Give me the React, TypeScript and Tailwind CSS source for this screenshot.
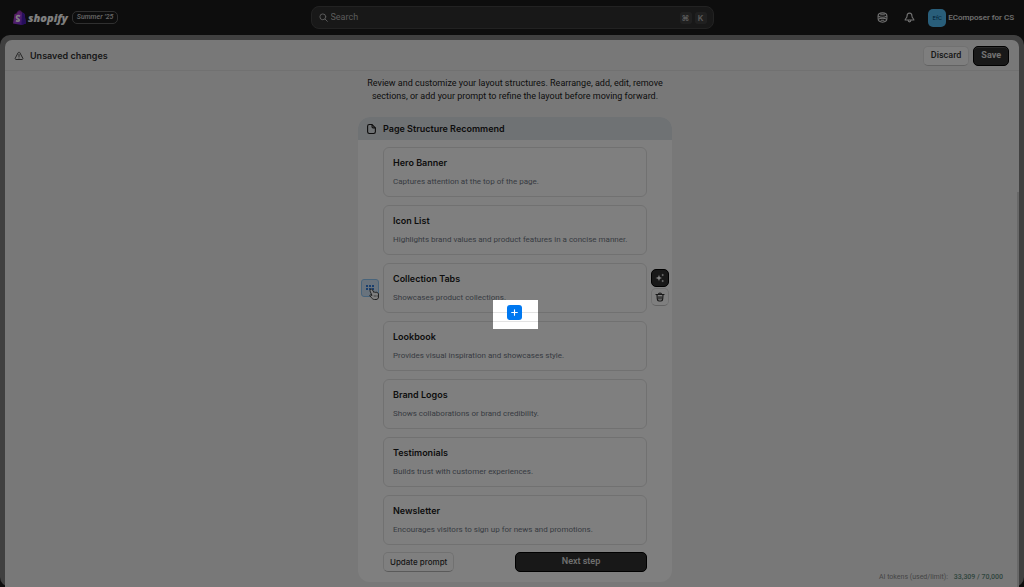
import type { ReactNode } from 'react';

const sections = [
  { title: 'Hero Banner', text: 'Captures attention at the top of the page.' },
  { title: 'Icon List', text: 'Highlights brand values and product features in a concise manner.' },
  { title: 'Collection Tabs', text: 'Showcases product collections.' },
  { title: 'Lookbook', text: 'Provides visual inspiration and showcases style.' },
  { title: 'Brand Logos', text: 'Shows collaborations or brand credibility.' },
  { title: 'Testimonials', text: 'Builds trust with customer experiences.' },
  { title: 'Newsletter', text: 'Encourages visitors to sign up for news and promotions.' },
];

function ShopifyBag() {
  return (
    <svg viewBox="0 0 26 30" className="h-[15px] w-[13px]" aria-hidden="true">
      <defs>
        <linearGradient id="bag" x1="0" y1="0" x2="1" y2="1">
          <stop offset="0" stopColor="#c83fc0" />
          <stop offset="0.55" stopColor="#9a3be0" />
          <stop offset="1" stopColor="#5a20d0" />
        </linearGradient>
      </defs>
      <path d="M3 8 7 7C8 3 11 0 14 1c2 0 3 2 4 4l3 1 2 2 3 19-9 3L0 27Z" fill="url(#bag)" />
      <path d="m18 5 3 1 2 2 3 19-9 3Z" fill="#4d1fb8" />
      <path d="M7 8c1-4 4-6 6-6s3 2 3 5" fill="none" stroke="#6d238c" strokeWidth="1.3" />
      <path d="M14 12.500c-4-2.500-7-.5-7 2 0 3 5.500 3 5.500 6 0 2.500-3.500 2.500-6.500.5" fill="none" stroke="#fff" strokeWidth="3.400" />
    </svg>
  );
}

function CoinsIcon() {
  return (
    <svg viewBox="0 0 20 20" className="size-[11px]" fill="none" stroke="currentColor" strokeWidth="2" strokeLinejoin="round" aria-hidden="true">
      <path d="M10 1.500c5 0 8 2 8 5.500v5c0 4-3 6.500-8 6.500S2 16 2 12V7c0-3.500 3-5.500 8-5.500Z" />
      <path d="M2 7c4 3.500 12 3.500 16 0" />
      <path d="M2 13.500c4-3 12-3 16 0" />
      <path d="M6.500 5h7M7.500 15h5" strokeLinecap="round" />
    </svg>
  );
}

function BellIcon() {
  return (
    <svg viewBox="0 0 20 20" className="size-[11px]" fill="none" stroke="currentColor" strokeWidth="2" strokeLinejoin="round" aria-hidden="true">
      <path d="M10 2C7 2 5.500 4 5.500 7.500c0 3-2.500 4-3.500 7h16c-1-3-3.500-4-3.500-7C14.500 4 13 2 10 2Z" />
      <path d="M7.500 14.500c0 4.500 5 4.500 5 0" />
    </svg>
  );
}

function WarningIcon() {
  return (
    <svg viewBox="0 0 20 20" className="size-[10px]" fill="none" stroke="currentColor" strokeWidth="2" strokeLinejoin="round" strokeLinecap="round" aria-hidden="true">
      <path d="M8.400 3.200c.7-1.300 2.500-1.300 3.200 0l6 11.200c.7 1.200-.2 2.600-1.600 2.600H4c-1.400 0-2.300-1.400-1.600-2.600Z" />
      <path d="M10 7v4M10 14v.1" />
    </svg>
  );
}

function PageIcon() {
  return (
    <svg viewBox="0 0 16 18" className="h-[10px] w-[9px]" fill="none" stroke="currentColor" strokeWidth="2" strokeLinejoin="round" aria-hidden="true">
      <path d="M4 1h5l6 6v7a3 3 0 0 1-3 3H4a3 3 0 0 1-3-3V4a3 3 0 0 1 3-3Z" />
      <path d="M9 1v4a2 2 0 0 0 2 2h4" />
    </svg>
  );
}

function SparkIcon() {
  return (
    <svg viewBox="0 0 20 20" className="size-[10px]" fill="currentColor" aria-hidden="true">
      <path d="M8 3c.8 4.600 2 6.200 6 7-4 .8-5.200 2.400-6 7-.8-4.600-2-6.200-7-7 5-.8 6.200-2.400 7-7Z" />
      <path d="M15.500 1c.4 2 1 2.600 3 3-2 .4-2.600 1-3 3-.4-2-1-2.600-3-3 2-.4 2.600-1 3-3ZM15.500 13c.4 2 1 2.600 3 3-2 .4-2.600 1-3 3-.4-2-1-2.600-3-3 2-.4 2.600-1 3-3Z" />
    </svg>
  );
}

function TrashIcon() {
  return (
    <svg viewBox="0 0 20 20" className="size-[10px]" fill="none" stroke="currentColor" strokeWidth="2.400" strokeLinecap="round" strokeLinejoin="round" aria-hidden="true">
      <path d="M2 5h16M7 5c0-4 6-4 6 0M4 5l.6 9c.2 3 1 4 3.400 4h4c2.400 0 3.200-1 3.400-4l.6-9M8 9v5M12 9v5" />
    </svg>
  );
}

function DragIcon() {
  return (
    <svg viewBox="0 0 8 6" className="h-[6px] w-2" fill="#005bd3" aria-hidden="true">
      {[1, 4, 7].map((x) => [1, 4].map((y) => <circle key={`${x}-${y}`} cx={x} cy={y} r="1" />))}
    </svg>
  );
}

function HandCursor() {
  return (
    <svg viewBox="0 0 22 24" className="absolute top-[8px] left-[7px] h-3 w-[11px]" aria-hidden="true">
      <path
        d="M3 3c1-2 3-1 4 1l3 5 1-1c1-1 2 0 2 1 1-1 3-1 3 1 1-1 3 0 3 2v6c0 3-2 5-5 5h-3c-3 0-5-2-9-7-1-2 0-3 2-2l2 1-4-9c0-1 0-2 1-3Z"
        fill="#fff"
        stroke="#303030"
        strokeWidth="1.800"
        strokeLinejoin="round"
      />
      <path d="M10.500 14v4M13.500 14v4M16.500 14v4" stroke="#303030" strokeWidth="0.800" />
    </svg>
  );
}

function Key({ children }: { children: ReactNode }) {
  return (
    <kbd className="flex size-3 items-center justify-center rounded-[3px] bg-[#414141] font-['Inter',sans-serif] text-[8px] font-semibold text-[#b5b5b5]">
      {children}
    </kbd>
  );
}

function TopBar() {
  return (
    <header className="grid h-[35px] shrink-0 grid-cols-[1fr_403px_1fr] items-center bg-[#1a1a1a] text-[#e3e3e3]">
      <div className="flex items-center pl-[13px]">
        <ShopifyBag />
        <span className="ml-[2px] font-['Open_Sans',sans-serif] text-[11px] leading-4 font-extrabold text-white italic">shopify</span>
        <span className="ml-1 flex h-[13px] items-center rounded-[5px] border border-[#616161] px-1 font-['Roboto',sans-serif] text-[7px] leading-[11px] font-medium text-[#d0d0d0] italic">
          Summer ’25
        </span>
      </div>
      <label className="flex h-[23px] items-center rounded-[8px] border border-[#454545] bg-[#303030] pr-[6px] pl-[7px]">
        <svg viewBox="0 0 20 20" className="size-[9px] text-[#b5b5b5]" fill="none" stroke="currentColor" strokeWidth="2.200" strokeLinecap="round" aria-hidden="true">
          <circle cx="8.500" cy="8.500" r="6.500" />
          <path d="m13.500 13.500 5 5" />
        </svg>
        <input
          type="text"
          aria-label="Search"
          placeholder="Search"
          className="ml-[3px] min-w-0 flex-1 bg-transparent font-['Roboto',sans-serif] text-[9px] outline-none placeholder:text-[#b5b5b5]"
        />
        <span className="flex gap-[3px]">
          <Key>⌘</Key>
          <Key>K</Key>
        </span>
      </label>
      <div className="flex items-center justify-end pr-[10px]">
        <button type="button" aria-label="Sidekick" className="mr-4"><CoinsIcon /></button>
        <button type="button" aria-label="Notifications" className="mr-[13px]"><BellIcon /></button>
        <button type="button" className="flex items-center gap-[2px] font-['Roboto',sans-serif] text-[8px] font-medium">
          <span className="flex size-[18px] items-center justify-center rounded-[5px] bg-[#52bdf5] text-[6px] font-normal text-[#003d68]">EfC</span>
          EComposer for CS
        </button>
      </div>
    </header>
  );
}

function SaveBar() {
  return (
    <div className="flex h-[31px] shrink-0 items-center border-b border-[#e3e3e3] pt-px pr-[10px] pl-[9px]">
      <span className="text-[#4a4a4a]"><WarningIcon /></span>
      <h1 className="ml-[6px] flex-1 text-[9px] font-semibold text-[#303030]">Unsaved changes</h1>
      <button type="button" className="h-5 rounded-[5px] border border-[#e3e3e3] border-b-[#c4c4c4] bg-[#fdfdfd] px-[7px] font-['Roboto',sans-serif] text-[9px] font-medium text-[#303030]">
        Discard
      </button>
      <button type="button" className="ml-1 h-5 rounded-[5px] border border-black bg-[#303030] px-[7px] font-['Roboto',sans-serif] text-[9px] font-bold text-[#e3e3e3] shadow-[inset_0_1px_0_#555]">
        Save
      </button>
    </div>
  );
}

function SectionCard({ title, text, active }: { title: string; text: string; active: boolean }) {
  return (
    <li className="relative">
      {active && (
        <button type="button" aria-label="Move section" className="absolute top-4 left-[-22px] flex size-[18px] items-center justify-center rounded-[3px] border border-[#91c8f7] bg-[#d3e6fa]">
          <DragIcon />
          <HandCursor />
        </button>
      )}
      <article className="flex min-h-[50px] flex-col gap-[7px] rounded-[6px] border border-[#e3e3e3] px-[9px] pt-[9px]">
        <h3 className="text-[9px] leading-3 font-semibold text-[#1a1a1a]">{title}</h3>
        <p className="font-['Roboto',sans-serif] text-[8px] leading-3 text-[#707784]">{text}</p>
      </article>
      {active && (
        <>
          <div className="absolute top-[6px] right-[-22px] flex flex-col gap-px">
            <button type="button" aria-label="Generate with AI" className="flex size-[18px] items-center justify-center rounded-[5px] border border-black bg-[#303030] text-white">
              <SparkIcon />
            </button>
            <button type="button" aria-label="Delete section" className="flex size-[18px] items-center justify-center rounded-[5px] border border-[#e3e3e3] border-b-[#c4c4c4] bg-white text-[#303030]">
              <TrashIcon />
            </button>
          </div>
          {/* Tour spotlight: everything outside this box is dimmed by its shadow. */}
          <div className="absolute top-[37px] left-[110px] z-20 flex h-[29px] w-[45px] justify-center pt-[5px] pr-[2px] shadow-[0_0_0_2000px_rgba(0,0,0,0.5)]">
            <button type="button" aria-label="Add section" className="flex size-[15px] items-center justify-center rounded-[3px] bg-[#0078f0] text-white">
              <svg viewBox="0 0 10 10" className="size-[7px]" fill="none" stroke="currentColor" strokeWidth="1.600" strokeLinecap="round" aria-hidden="true">
                <path d="M5 1v8M1 5h8" />
              </svg>
            </button>
          </div>
        </>
      )}
    </li>
  );
}

export default function App() {
  return (
    <div className="relative flex min-h-screen flex-col overflow-hidden bg-[#1a1a1a] font-['Inter',sans-serif]">
      <TopBar />
      <div className="flex flex-1 flex-col rounded-[10px] bg-[#808080] px-[5px] pt-[5px]">
        <main className="relative flex flex-1 flex-col rounded-t-[7px] bg-[#f1f1f1]">
          <SaveBar />
          <div className="flex flex-col items-center pt-[6px] pb-[5px] pl-[6px]">
            <p className="w-[300px] text-center font-['Roboto',sans-serif] text-[9px] leading-[13px] text-[#202020]">
              Review and customize your layout structures. Rearrange, add, edit, remove sections, or add your prompt to refine the layout before moving forward.
            </p>
            <section className="mt-[14px] w-[314px] rounded-[12px] bg-white">
              <h2 className="flex h-[23px] items-center gap-[7px] rounded-t-[12px] bg-[#dfe4e8] pl-[9px] text-[9px] font-semibold text-[#1a1a1a]">
                <PageIcon />
                Page Structure Recommend
              </h2>
              <div className="px-[25px] pt-[7px] pb-[10px]">
                <ul className="flex flex-col gap-2">
                  {sections.map((s) => (
                    <SectionCard key={s.title} title={s.title} text={s.text} active={s.title === 'Collection Tabs'} />
                  ))}
                </ul>
                <div className="mt-[7px] flex items-center justify-between">
                  <button type="button" className="h-5 rounded-[5px] border border-[#e3e3e3] border-b-[#b5b5b5] px-[6px] text-[8px] font-medium text-[#303030]">
                    Update prompt
                  </button>
                  <button type="button" className="h-5 w-1/2 rounded-[5px] border border-black bg-[#303030] font-['Roboto',sans-serif] text-[9px] font-medium text-[#e3e3e3]">
                    Next step
                  </button>
                </div>
              </div>
            </section>
          </div>
          <div className="absolute right-4 bottom-[5px] flex gap-[6px] font-['Roboto',sans-serif] text-[7px] leading-[10px] text-[#8c8c8c]">
            <span>AI tokens (used/limit):</span>
            <span className="font-medium text-[#5f8c7c]">33,309 / 70,000</span>
          </div>
          <div className="absolute top-[152px] right-0 bottom-0 w-[2px] bg-[#d0d0d0]" />
        </main>
      </div>
    </div>
  );
}
